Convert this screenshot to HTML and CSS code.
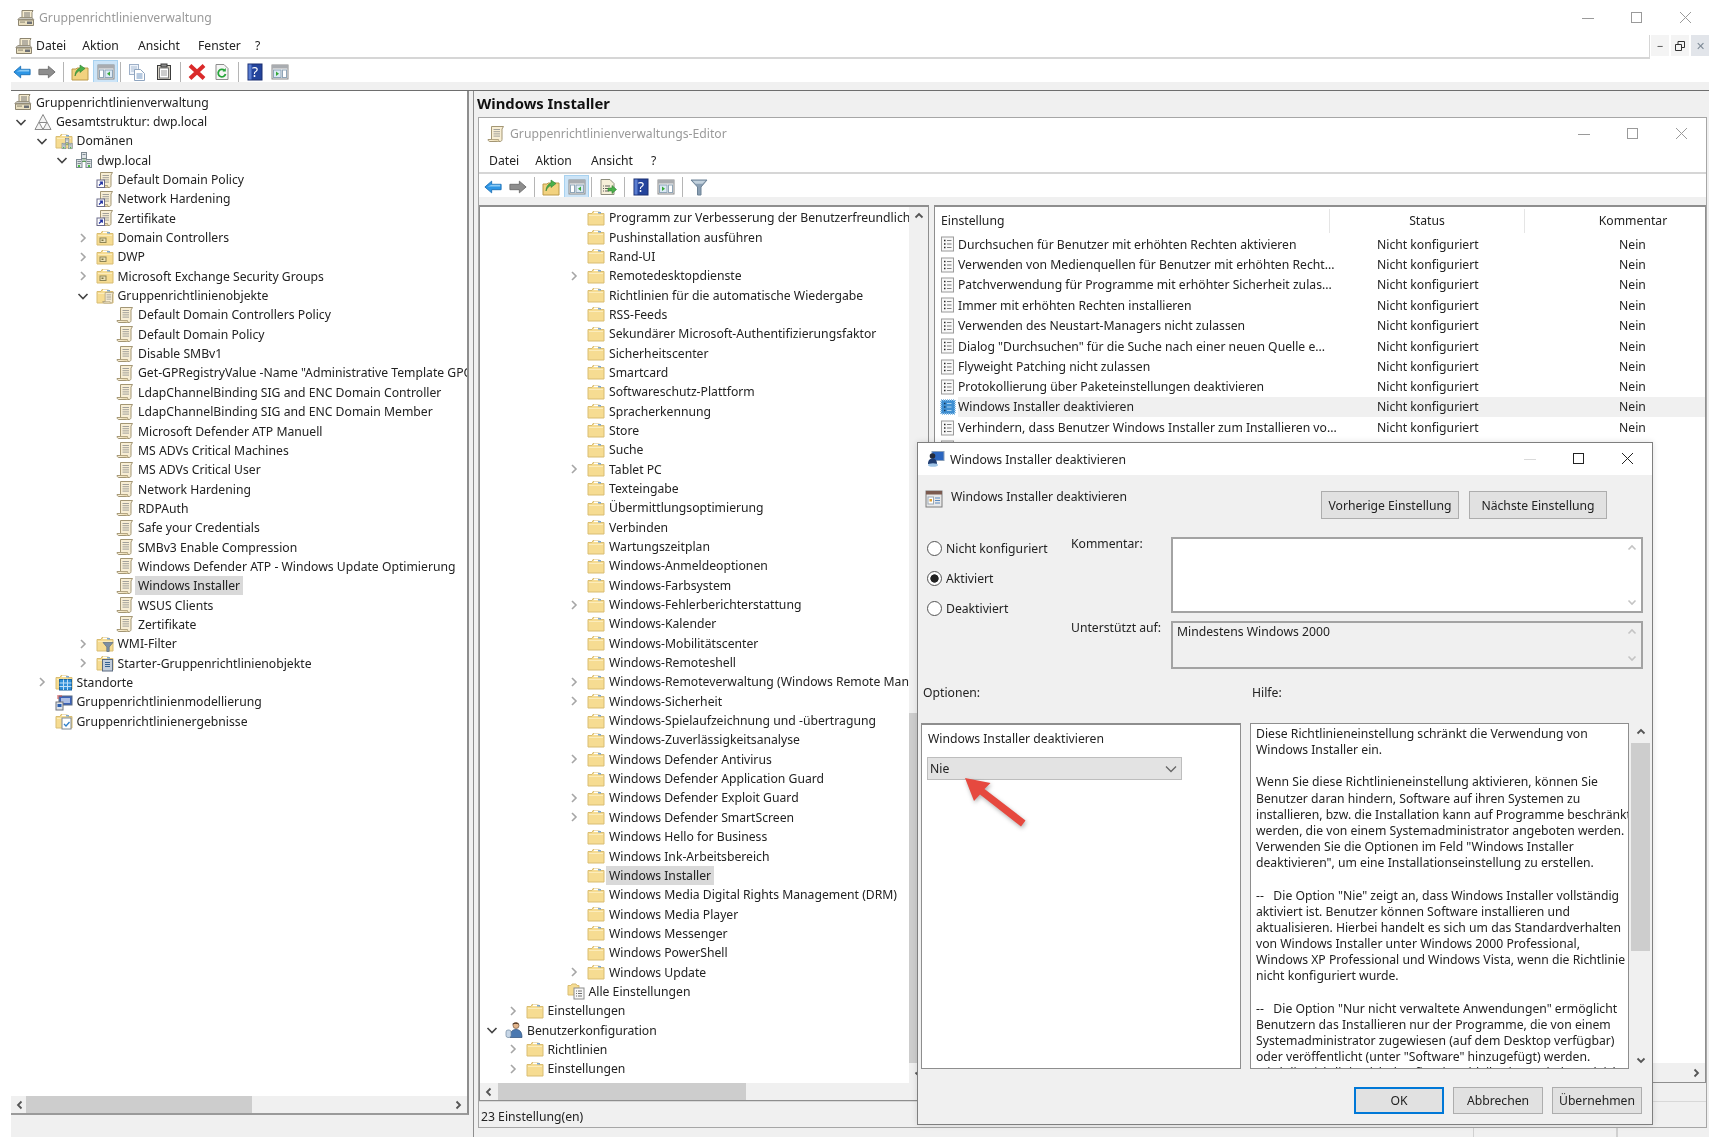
FILE: index.html
```html
<!DOCTYPE html>
<html lang="de">
<head>
    <meta charset="UTF-8">
    <title>Gruppenrichtlinienverwaltung</title>
    <link rel="stylesheet" href="styles.css">
</head>
<body>
<svg class="defs" width="0" height="0">
    <defs>
        <symbol id="chev-r" viewBox="0 0 14 14"><path d="M5 3l4 4-4 4" fill="none" stroke="#a6a6a6" stroke-width="1.6"/></symbol>
        <symbol id="chev-d" viewBox="0 0 14 14"><path d="M2.5 5l4.500 4.500L11.500 5" fill="none" stroke="#444" stroke-width="1.6"/></symbol>
        <symbol id="sb-l" viewBox="0 0 14 14"><path d="M8.500 3.500L5 7l3.500 3.500" fill="none" stroke="#555" stroke-width="1.800"/></symbol>
        <symbol id="sb-r" viewBox="0 0 14 14"><path d="M5.500 3.500L9 7l-3.500 3.500" fill="none" stroke="#555" stroke-width="1.800"/></symbol>
        <symbol id="sb-u" viewBox="0 0 14 14"><path d="M3.500 8.500L7 5l3.500 3.500" fill="none" stroke="#555" stroke-width="1.800"/></symbol>
        <symbol id="sb-d" viewBox="0 0 14 14"><path d="M3.500 5.500L7 9l3.500-3.500" fill="none" stroke="#555" stroke-width="1.800"/></symbol>
        <symbol id="sb-ug" viewBox="0 0 14 14"><path d="M3.500 8.500L7 5l3.500 3.500" fill="none" stroke="#c4c4c4" stroke-width="1.600"/></symbol>
        <symbol id="sb-dg" viewBox="0 0 14 14"><path d="M3.500 5.500L7 9l3.500-3.500" fill="none" stroke="#c4c4c4" stroke-width="1.600"/></symbol>

        <symbol id="folder" viewBox="0 0 18 18"><path d="M1 4.500h4l1-2h6l1 2h4v11.500H1z" fill="#f6dc92" stroke="#d9bd72"/><path d="M7 2.500h5l.6 1.500H7z" fill="#fff"/><rect x="2" y="6" width="14" height="1" fill="#fbecbc"/><rect x="11" y="3" width="3" height="1.500" fill="#7fa8d0"/></symbol>
        <symbol id="scroll" viewBox="0 0 18 18"><path d="M4.500 1.500h12l-1.500 2.500v10.500c0 1.200-.8 2-2 2H3c-1.200 0-2-1-2-2h3.500z" fill="#f8eed4" stroke="#a39674"/><path d="M6.500 4.500h6.500M6.500 6.700h6.500M6.500 8.900h6.500M6.500 11.100h6.500" stroke="#a2a09a"/><path d="M1 14.500h10.500l.5 2" fill="#ecdcb2" stroke="#a39674" stroke-width=".8"/></symbol>
        <symbol id="gpolink" viewBox="0 0 18 18"><use href="#scroll"/><rect x="1" y="9" width="7.500" height="7.500" fill="#fff" stroke="#6a6a8a"/><path d="M3 14.500l3-3M3.800 11.200H6.300V13.800" fill="none" stroke="#2030a0" stroke-width="1.200"/></symbol>
        <symbol id="console" viewBox="0 0 18 18"><path d="M5 1.500h11l-1 2v7H5z" fill="#f5ebcf" stroke="#8d8570"/><path d="M7 4h6M7 6h6M7 8h6" stroke="#777"/><path d="M1.500 11h15v5.500h-15z" fill="#e9dfc0" stroke="#8d8570"/><path d="M.8 10.500l2-2h12l2 2z" fill="#c7c5bd" stroke="#8d8570" stroke-width=".8"/><rect x="10" y="12.500" width="5" height="2.500" fill="#6d7075"/><rect x="3" y="12.500" width="5" height="1.200" fill="#9b9580"/></symbol>
        <symbol id="forest" viewBox="0 0 18 18"><path d="M9 1.500L17 16.500H1z" fill="#f4f4f4" stroke="#8a8a8a"/><path d="M5.200 9.500L9 16.500l3.800-7z" fill="#fff" stroke="#8a8a8a"/><path d="M5.200 9.500h7.600" stroke="#8a8a8a"/></symbol>
        <symbol id="servers" viewBox="0 0 18 18"><rect x="6.500" y="1.500" width="5" height="6" fill="#dfe3e6" stroke="#7e8a92"/><rect x="1.500" y="8.500" width="5.500" height="8" fill="#dfe3e6" stroke="#7e8a92"/><rect x="11" y="8.500" width="5.500" height="8" fill="#dfe3e6" stroke="#7e8a92"/><path d="M2.500 10.500h3.500M2.500 12.500h3.500M12 10.500h3.500M12 12.500h3.500M7.500 3.500h3" stroke="#7e8a92"/><rect x="3" y="14" width="2" height="2" fill="#4cb848"/><rect x="13" y="14" width="2" height="2" fill="#4cb848"/><path d="M9 7.500v3M7 10.500h4" stroke="#5b9a5b"/></symbol>
        <symbol id="domains" viewBox="0 0 18 18"><use href="#folder"/><g transform="translate(6 5.500) scale(.68)"><use href="#servers"/></g></symbol>
        <symbol id="ou" viewBox="0 0 18 18"><use href="#folder"/><rect x="4" y="9" width="6" height="4.500" fill="#ebe0b6" stroke="#8d8455"/><rect x="5.500" y="10.500" width="2" height="1.500" fill="#7c7440"/></symbol>
        <symbol id="gpos" viewBox="0 0 18 18"><use href="#folder"/><g transform="translate(6 4.500) scale(.7)"><use href="#scroll"/></g></symbol>
        <symbol id="wmi" viewBox="0 0 18 18"><use href="#folder"/><path d="M7 7.500h10l-3.800 4.500v4.500h-2.400V12z" fill="#7d8fa3" stroke="#5d6f83" stroke-width=".7"/></symbol>
        <symbol id="starter" viewBox="0 0 18 18"><use href="#folder"/><rect x="6.500" y="5.500" width="10" height="11.500" fill="#c3cedc" stroke="#5a6a80"/><path d="M9 8.500h5M9 10.500h5M9 12.500h5" stroke="#34608f"/></symbol>
        <symbol id="sites" viewBox="0 0 18 18"><use href="#folder"/><rect x="4.500" y="6.500" width="12" height="10.500" fill="#2f8fd8" stroke="#1d659f"/><path d="M8.500 6.500v10.500M12.500 6.500v10.500M4.500 10h12M4.500 13.500h12" stroke="#bfe0f7"/></symbol>
        <symbol id="model" viewBox="0 0 18 18"><rect x="4" y="3" width="13" height="9" fill="#3c63b8" stroke="#5a6a80"/><rect x="6" y="5" width="9" height="5" fill="#aebfe4"/><rect x="1" y="9" width="7" height="8" fill="#dfe3e8" stroke="#70757c"/><rect x="2.500" y="11" width="4" height="3" fill="#2b5fb0"/><path d="M2 3h5M2 5h2" stroke="#d04a4a"/></symbol>
        <symbol id="results" viewBox="0 0 18 18"><use href="#folder"/><rect x="7" y="6" width="9" height="11" fill="#fff" stroke="#7f8a93"/><path d="M9 12l2 2 3.500-4" fill="none" stroke="#2f7fc8" stroke-width="1.300"/></symbol>
        <symbol id="user" viewBox="0 0 18 18"><circle cx="11" cy="4.500" r="3" fill="#e2b48a" stroke="#75583f" stroke-width=".7"/><path d="M7 3.500c1-2.500 6-2.500 7 0-2-1-5-1-7 0z" fill="#4a3220"/><path d="M5 16.500c0-6 2.500-8 6-8s6 2 6 8z" fill="#4a78b0" stroke="#2d4d78" stroke-width=".7"/><rect x="1" y="9" width="5" height="7.500" rx="2" fill="#c7d6e6" stroke="#7088a0" stroke-width=".7"/></symbol>
        <symbol id="allset" viewBox="0 0 18 18"><path d="M1 3.500h3l1-1.500h4l1 1.500h2V13H1z" fill="#f6dc92" stroke="#d9bd72"/><rect x="7" y="6" width="10" height="11" fill="#f7f7f7" stroke="#8c8c8c"/><path d="M9 9h1M11 9h4M9 11.500h1M11 11.500h4M9 14h1M11 14h4" stroke="#6e6e6e"/></symbol>
        <symbol id="policy" viewBox="0 0 16 16"><rect x="1.500" y="1" width="12" height="14" fill="#f8f8f8" stroke="#9a9a9a"/><path d="M4 4.500h1.500M4 8h1.500M4 11.500h1.500" stroke="#222" stroke-width="1.400"/><path d="M7 4.500h4.500M7 8h4.500M7 11.500h4.500" stroke="#7b7b7b"/></symbol>
        <symbol id="policy-sel" viewBox="0 0 16 16"><rect x="1" y="1" width="14" height="14" fill="#3f8fd2"/><rect x="1" y="1" width="14" height="14" fill="none" stroke="#8fc0e6" stroke-dasharray="1 1" stroke-width="2"/><path d="M4 4.500h1.500M4 8h1.500M4 11.500h1.500" stroke="#14385c" stroke-width="1.400"/><path d="M7 4.500h4.500M7 8h4.500M7 11.500h4.500" stroke="#a9d2ef"/></symbol>
        <symbol id="dlgicon" viewBox="0 0 18 18"><rect x="5" y="1.500" width="12" height="9" fill="#2b66c0" stroke="#8aa0bb"/><circle cx="5.500" cy="6" r="2.800" fill="#22293a"/><path d="M1 14c0-4 2-5.500 4.500-5.500S10 10 10 14z" fill="#1f3c70"/><ellipse cx="6" cy="15" rx="5" ry="1.800" fill="#9fc4e6"/></symbol>
        <symbol id="seticon" viewBox="0 0 18 18"><rect x="1" y="1" width="16" height="16" fill="#e8e8e8" stroke="#7d7d7d"/><rect x="1" y="1" width="16" height="3.500" fill="#7b5a4f"/><rect x="3" y="7" width="5.500" height="7" fill="#fff" stroke="#9aa7b5"/><rect x="4.500" y="9" width="2.500" height="2.500" fill="#e0a030"/><path d="M10 8h5M10 10.500h5M10 13h5" stroke="#5a8ac0"/></symbol>

        <symbol id="t-back" viewBox="0 0 20 18"><path d="M1 9l7.500-6.500V6H19v6H8.500v3.500z" fill="#2d96e6" stroke="#1c6fb4" stroke-linejoin="round"/><path d="M8.500 6.500H18v2H4z" fill="#8ccbf5"/></symbol>
        <symbol id="t-fwd" viewBox="0 0 20 18"><path d="M19 9l-7.500-6.500V6H1v6h10.500v3.500z" fill="#8e8e8e" stroke="#6c6c6c" stroke-linejoin="round"/></symbol>
        <symbol id="t-up" viewBox="0 0 18 18"><path d="M1 6h4l1-1h11v12H1z" fill="#f2d27f" stroke="#bc9a4a"/><path d="M4 13c0-4 2-7 5-8V2l5 3.500-5 4V7.500c-2 .5-4 2.500-5 5.500z" fill="#49b04a" stroke="#2f7f30" stroke-width=".6"/></symbol>
        <symbol id="t-pane" viewBox="0 0 18 18"><rect x="1" y="2" width="16" height="14" fill="#f3f3f3" stroke="#8a8a8a"/><rect x="1" y="2" width="16" height="3.500" fill="#a9acb0"/><rect x="2.500" y="7" width="4" height="7.500" fill="#fff" stroke="#8fa5b8"/><rect x="8" y="7" width="7.500" height="7.500" fill="#dbe9f5" stroke="#8fa5b8"/><path d="M13 8.500v4.500l-3-2.250z" fill="#35a835"/></symbol>
        <symbol id="t-act" viewBox="0 0 18 18"><rect x="1" y="2" width="16" height="14" fill="#f3f3f3" stroke="#8a8a8a"/><rect x="1" y="2" width="16" height="3.500" fill="#a9acb0"/><rect x="2.500" y="7" width="7.500" height="7.500" fill="#dbe9f5" stroke="#8fa5b8"/><rect x="11.500" y="7" width="4" height="7.500" fill="#fff" stroke="#8fa5b8"/><path d="M5 8.500v4.500l3-2.250z" fill="#35a835"/></symbol>
        <symbol id="t-copy" viewBox="0 0 18 18"><rect x="1.500" y="1.500" width="9" height="10" fill="#eef3fa" stroke="#9eb0c8"/><path d="M3 4h6M3 6h6M3 8h4" stroke="#a9bcd4"/><path d="M6.500 6.500h6l4 4v7h-10z" fill="#fff" stroke="#8ea4bf"/><path d="M8.500 11h6M8.500 13h6M8.500 15h6" stroke="#6d93c0"/></symbol>
        <symbol id="t-paste" viewBox="0 0 18 18"><rect x="2.500" y="2.500" width="13" height="14" fill="#d6d2c6" stroke="#3c3c3c"/><rect x="4.500" y="5" width="9" height="10" fill="#fff" stroke="#777"/><rect x="6" y="1" width="6" height="3" fill="#8d8d8d" stroke="#3c3c3c"/><path d="M6 8h6M6 10h6M6 12h6" stroke="#999"/></symbol>
        <symbol id="t-del" viewBox="0 0 18 18"><path d="M2 2.500l14 13M16 2.500l-14 13" stroke="#da2a2a" stroke-width="4"/></symbol>
        <symbol id="t-ref" viewBox="0 0 18 18"><path d="M3 1.500h8l4 4v11H3z" fill="#f5f5f5" stroke="#8d8d8d"/><path d="M12.500 11a3.700 3.700 0 1 1-1-3.500" fill="none" stroke="#26a53a" stroke-width="1.800"/><path d="M12.800 5v3.500H9.500z" fill="#26a53a"/></symbol>
        <symbol id="t-help" viewBox="0 0 18 18"><rect x="2" y="1" width="14" height="16" fill="#24449c" stroke="#1a2f70"/><rect x="2.500" y="1.500" width="3" height="15" fill="#5a7dd0"/></symbol>
        <symbol id="t-exp" viewBox="0 0 18 18"><path d="M2 1.500h9l4 4v11H2z" fill="#f6efd8" stroke="#8e8e7e"/><path d="M4 8h1M6 8h5M4 10.500h1M6 10.500h4M4 13h1M6 13h4" stroke="#5f5f5f"/><path d="M9 10h4V7.500l4.500 4-4.500 4V13H9z" fill="#49b04a" stroke="#2f7f30" stroke-width=".6"/></symbol>
        <symbol id="t-filter" viewBox="0 0 18 18"><path d="M1 2h16l-6 7v8H7.500V9z" fill="#8a9fb3" stroke="#6c8296"/><path d="M2.500 2.800h13l-3 3h-7z" fill="#c3d2de"/></symbol>
        <symbol id="w-min" viewBox="0 0 14 14"><path d="M1 7.500h12" stroke="#9a9a9a"/></symbol>
        <symbol id="w-max" viewBox="0 0 14 14"><rect x="1.500" y="1.500" width="10" height="10" fill="none" stroke="#9a9a9a"/></symbol>
        <symbol id="w-close" viewBox="0 0 14 14"><path d="M1 1l11 11M12 1L1 12" stroke="#9a9a9a"/></symbol>
        <symbol id="w-maxk" viewBox="0 0 14 14"><rect x="1.500" y="1.500" width="10" height="10" fill="none" stroke="#222"/></symbol>
        <symbol id="w-closek" viewBox="0 0 14 14"><path d="M1 1l11 11M12 1L1 12" stroke="#222"/></symbol>
        <symbol id="w-minf" viewBox="0 0 14 14"><path d="M1 7.500h12" stroke="#dadada"/></symbol>
    </defs>
</svg>

<div class="app">
    <div class="title-bar">
        <svg class="ic title-icon"><use href="#console"/></svg>
        <span class="title-text">Gruppenrichtlinienverwaltung</span>
        <div class="win-controls">
            <svg class="wc"><use href="#w-min"/></svg>
            <svg class="wc"><use href="#w-max"/></svg>
            <svg class="wc"><use href="#w-close"/></svg>
        </div>
    </div>

    <div class="menu-bar">
        <svg class="ic menu-icon"><use href="#console"/></svg>
        <span class="menu-item m-datei">Datei</span>
        <span class="menu-item m-aktion">Aktion</span>
        <span class="menu-item m-ansicht">Ansicht</span>
        <span class="menu-item m-fenster">Fenster</span>
        <span class="menu-item">?</span>
        <div class="mdi-controls">
            <span class="mdi-btn">&#8722;</span>
            <span class="mdi-btn"><svg width="12" height="12" viewBox="0 0 12 12"><path d="M1.500 4.500h6v6h-6zM4 4.500V1.500h6.500v6h-3" fill="none" stroke="#333"/></svg></span>
            <span class="mdi-btn mdi-close">&#10005;</span>
        </div>
    </div>

    <div class="tool-bar">
        <svg class="tb"><use href="#t-back"/></svg>
        <svg class="tb"><use href="#t-fwd"/></svg>
        <span class="tb-sep"></span>
        <svg class="tb"><use href="#t-up"/></svg>
        <span class="tb-on"><svg class="tb"><use href="#t-pane"/></svg></span>
        <span class="tb-sep"></span>
        <svg class="tb"><use href="#t-copy"/></svg>
        <svg class="tb tb-paste"><use href="#t-paste"/></svg>
        <span class="tb-sep"></span>
        <svg class="tb"><use href="#t-del"/></svg>
        <svg class="tb"><use href="#t-ref"/></svg>
        <span class="tb-sep"></span>
        <span class="help-btn"><svg class="tb"><use href="#t-help"/></svg><span class="help-q">?</span></span>
        <svg class="tb"><use href="#t-act"/></svg>
    </div>
    <div class="band"></div>

    <div class="content">
        <div class="left-col">
            <div class="left-pane">
                <div class="tree left-tree">
                    <div class="row l0"><svg class="ic"><use href="#console"/></svg><span class="lbl">Gruppenrichtlinienverwaltung</span></div>
                    <div class="row l1"><svg class="tw"><use href="#chev-d"/></svg><svg class="ic"><use href="#forest"/></svg><span class="lbl">Gesamtstruktur: dwp.local</span></div>
                    <div class="row l2"><svg class="tw"><use href="#chev-d"/></svg><svg class="ic"><use href="#domains"/></svg><span class="lbl">Domänen</span></div>
                    <div class="row l3"><svg class="tw"><use href="#chev-d"/></svg><svg class="ic"><use href="#servers"/></svg><span class="lbl">dwp.local</span></div>
                    <div class="row l4"><span class="tw"></span><svg class="ic"><use href="#gpolink"/></svg><span class="lbl">Default Domain Policy</span></div>
                    <div class="row l4"><span class="tw"></span><svg class="ic"><use href="#gpolink"/></svg><span class="lbl">Network Hardening</span></div>
                    <div class="row l4"><span class="tw"></span><svg class="ic"><use href="#gpolink"/></svg><span class="lbl">Zertifikate</span></div>
                    <div class="row l4"><svg class="tw"><use href="#chev-r"/></svg><svg class="ic"><use href="#ou"/></svg><span class="lbl">Domain Controllers</span></div>
                    <div class="row l4"><svg class="tw"><use href="#chev-r"/></svg><svg class="ic"><use href="#ou"/></svg><span class="lbl">DWP</span></div>
                    <div class="row l4"><svg class="tw"><use href="#chev-r"/></svg><svg class="ic"><use href="#ou"/></svg><span class="lbl">Microsoft Exchange Security Groups</span></div>
                    <div class="row l4"><svg class="tw"><use href="#chev-d"/></svg><svg class="ic"><use href="#gpos"/></svg><span class="lbl">Gruppenrichtlinienobjekte</span></div>
                    <div class="row l5"><span class="tw"></span><svg class="ic"><use href="#scroll"/></svg><span class="lbl">Default Domain Controllers Policy</span></div>
                    <div class="row l5"><span class="tw"></span><svg class="ic"><use href="#scroll"/></svg><span class="lbl">Default Domain Policy</span></div>
                    <div class="row l5"><span class="tw"></span><svg class="ic"><use href="#scroll"/></svg><span class="lbl">Disable SMBv1</span></div>
                    <div class="row l5"><span class="tw"></span><svg class="ic"><use href="#scroll"/></svg><span class="lbl">Get-GPRegistryValue -Name "Administrative Template GPO"</span></div>
                    <div class="row l5"><span class="tw"></span><svg class="ic"><use href="#scroll"/></svg><span class="lbl">LdapChannelBinding SIG and ENC Domain Controller</span></div>
                    <div class="row l5"><span class="tw"></span><svg class="ic"><use href="#scroll"/></svg><span class="lbl">LdapChannelBinding SIG and ENC Domain Member</span></div>
                    <div class="row l5"><span class="tw"></span><svg class="ic"><use href="#scroll"/></svg><span class="lbl">Microsoft Defender ATP Manuell</span></div>
                    <div class="row l5"><span class="tw"></span><svg class="ic"><use href="#scroll"/></svg><span class="lbl">MS ADVs Critical Machines</span></div>
                    <div class="row l5"><span class="tw"></span><svg class="ic"><use href="#scroll"/></svg><span class="lbl">MS ADVs Critical User</span></div>
                    <div class="row l5"><span class="tw"></span><svg class="ic"><use href="#scroll"/></svg><span class="lbl">Network Hardening</span></div>
                    <div class="row l5"><span class="tw"></span><svg class="ic"><use href="#scroll"/></svg><span class="lbl">RDPAuth</span></div>
                    <div class="row l5"><span class="tw"></span><svg class="ic"><use href="#scroll"/></svg><span class="lbl">Safe your Credentials</span></div>
                    <div class="row l5"><span class="tw"></span><svg class="ic"><use href="#scroll"/></svg><span class="lbl">SMBv3 Enable Compression</span></div>
                    <div class="row l5"><span class="tw"></span><svg class="ic"><use href="#scroll"/></svg><span class="lbl">Windows Defender ATP - Windows Update Optimierung</span></div>
                    <div class="row l5"><span class="tw"></span><svg class="ic"><use href="#scroll"/></svg><span class="lbl sel">Windows Installer</span></div>
                    <div class="row l5"><span class="tw"></span><svg class="ic"><use href="#scroll"/></svg><span class="lbl">WSUS Clients</span></div>
                    <div class="row l5"><span class="tw"></span><svg class="ic"><use href="#scroll"/></svg><span class="lbl">Zertifikate</span></div>
                    <div class="row l4"><svg class="tw"><use href="#chev-r"/></svg><svg class="ic"><use href="#wmi"/></svg><span class="lbl">WMI-Filter</span></div>
                    <div class="row l4"><svg class="tw"><use href="#chev-r"/></svg><svg class="ic"><use href="#starter"/></svg><span class="lbl">Starter-Gruppenrichtlinienobjekte</span></div>
                    <div class="row l2"><svg class="tw"><use href="#chev-r"/></svg><svg class="ic"><use href="#sites"/></svg><span class="lbl">Standorte</span></div>
                    <div class="row l2"><span class="tw"></span><svg class="ic"><use href="#model"/></svg><span class="lbl">Gruppenrichtlinienmodellierung</span></div>
                    <div class="row l2"><span class="tw"></span><svg class="ic"><use href="#results"/></svg><span class="lbl">Gruppenrichtlinienergebnisse</span></div>
                </div>
                <div class="hscroll">
                    <svg class="sb-arrow"><use href="#sb-l"/></svg>
                    <div class="hs-track left-track"><span class="hs-thumb left-thumb"></span></div>
                    <svg class="sb-arrow"><use href="#sb-r"/></svg>
                </div>
            </div>
        </div>

        <div class="right-col">
            <div class="pane-head">Windows Installer</div>
            <div class="editor">
                <div class="title-bar ed-title">
                    <svg class="ic ed-icon"><use href="#scroll"/></svg>
                    <span class="title-text">Gruppenrichtlinienverwaltungs-Editor</span>
                    <div class="win-controls">
                        <svg class="wc"><use href="#w-min"/></svg>
                        <svg class="wc"><use href="#w-max"/></svg>
                        <svg class="wc"><use href="#w-close"/></svg>
                    </div>
                </div>
                <div class="menu-bar ed-menu">
                    <span class="menu-item m-datei">Datei</span>
                    <span class="menu-item m-aktion">Aktion</span>
                    <span class="menu-item m-ansicht">Ansicht</span>
                    <span class="menu-item">?</span>
                </div>
                <div class="tool-bar ed-tools">
                    <svg class="tb"><use href="#t-back"/></svg>
                    <svg class="tb"><use href="#t-fwd"/></svg>
                    <span class="tb-sep"></span>
                    <svg class="tb"><use href="#t-up"/></svg>
                    <span class="tb-on"><svg class="tb"><use href="#t-pane"/></svg></span>
                    <span class="tb-sep"></span>
                    <svg class="tb"><use href="#t-exp"/></svg>
                    <span class="tb-sep"></span>
                    <span class="help-btn"><svg class="tb"><use href="#t-help"/></svg><span class="help-q">?</span></span>
                    <svg class="tb"><use href="#t-act"/></svg>
                    <span class="tb-sep"></span>
                    <svg class="tb"><use href="#t-filter"/></svg>
                </div>
                <div class="band"></div>

                <div class="ed-panes">
                    <div class="ed-tree-pane">
                        <div class="ed-tree-main">
                            <div class="tree ed-tree">
                                <div class="row d5"><span class="tw"></span><svg class="ic"><use href="#folder"/></svg><span class="lbl">Programm zur Verbesserung der Benutzerfreundlichkeit</span></div>
                                <div class="row d5"><span class="tw"></span><svg class="ic"><use href="#folder"/></svg><span class="lbl">Pushinstallation ausführen</span></div>
                                <div class="row d5"><span class="tw"></span><svg class="ic"><use href="#folder"/></svg><span class="lbl">Rand-UI</span></div>
                                <div class="row d5"><svg class="tw"><use href="#chev-r"/></svg><svg class="ic"><use href="#folder"/></svg><span class="lbl">Remotedesktopdienste</span></div>
                                <div class="row d5"><span class="tw"></span><svg class="ic"><use href="#folder"/></svg><span class="lbl">Richtlinien für die automatische Wiedergabe</span></div>
                                <div class="row d5"><span class="tw"></span><svg class="ic"><use href="#folder"/></svg><span class="lbl">RSS-Feeds</span></div>
                                <div class="row d5"><span class="tw"></span><svg class="ic"><use href="#folder"/></svg><span class="lbl">Sekundärer Microsoft-Authentifizierungsfaktor</span></div>
                                <div class="row d5"><span class="tw"></span><svg class="ic"><use href="#folder"/></svg><span class="lbl">Sicherheitscenter</span></div>
                                <div class="row d5"><span class="tw"></span><svg class="ic"><use href="#folder"/></svg><span class="lbl">Smartcard</span></div>
                                <div class="row d5"><span class="tw"></span><svg class="ic"><use href="#folder"/></svg><span class="lbl">Softwareschutz-Plattform</span></div>
                                <div class="row d5"><span class="tw"></span><svg class="ic"><use href="#folder"/></svg><span class="lbl">Spracherkennung</span></div>
                                <div class="row d5"><span class="tw"></span><svg class="ic"><use href="#folder"/></svg><span class="lbl">Store</span></div>
                                <div class="row d5"><span class="tw"></span><svg class="ic"><use href="#folder"/></svg><span class="lbl">Suche</span></div>
                                <div class="row d5"><svg class="tw"><use href="#chev-r"/></svg><svg class="ic"><use href="#folder"/></svg><span class="lbl">Tablet PC</span></div>
                                <div class="row d5"><span class="tw"></span><svg class="ic"><use href="#folder"/></svg><span class="lbl">Texteingabe</span></div>
                                <div class="row d5"><span class="tw"></span><svg class="ic"><use href="#folder"/></svg><span class="lbl">Übermittlungsoptimierung</span></div>
                                <div class="row d5"><span class="tw"></span><svg class="ic"><use href="#folder"/></svg><span class="lbl">Verbinden</span></div>
                                <div class="row d5"><span class="tw"></span><svg class="ic"><use href="#folder"/></svg><span class="lbl">Wartungszeitplan</span></div>
                                <div class="row d5"><span class="tw"></span><svg class="ic"><use href="#folder"/></svg><span class="lbl">Windows-Anmeldeoptionen</span></div>
                                <div class="row d5"><span class="tw"></span><svg class="ic"><use href="#folder"/></svg><span class="lbl">Windows-Farbsystem</span></div>
                                <div class="row d5"><svg class="tw"><use href="#chev-r"/></svg><svg class="ic"><use href="#folder"/></svg><span class="lbl">Windows-Fehlerberichterstattung</span></div>
                                <div class="row d5"><span class="tw"></span><svg class="ic"><use href="#folder"/></svg><span class="lbl">Windows-Kalender</span></div>
                                <div class="row d5"><span class="tw"></span><svg class="ic"><use href="#folder"/></svg><span class="lbl">Windows-Mobilitätscenter</span></div>
                                <div class="row d5"><span class="tw"></span><svg class="ic"><use href="#folder"/></svg><span class="lbl">Windows-Remoteshell</span></div>
                                <div class="row d5"><svg class="tw"><use href="#chev-r"/></svg><svg class="ic"><use href="#folder"/></svg><span class="lbl">Windows-Remoteverwaltung (Windows Remote Management)</span></div>
                                <div class="row d5"><svg class="tw"><use href="#chev-r"/></svg><svg class="ic"><use href="#folder"/></svg><span class="lbl">Windows-Sicherheit</span></div>
                                <div class="row d5"><span class="tw"></span><svg class="ic"><use href="#folder"/></svg><span class="lbl">Windows-Spielaufzeichnung und -übertragung</span></div>
                                <div class="row d5"><span class="tw"></span><svg class="ic"><use href="#folder"/></svg><span class="lbl">Windows-Zuverlässigkeitsanalyse</span></div>
                                <div class="row d5"><svg class="tw"><use href="#chev-r"/></svg><svg class="ic"><use href="#folder"/></svg><span class="lbl">Windows Defender Antivirus</span></div>
                                <div class="row d5"><span class="tw"></span><svg class="ic"><use href="#folder"/></svg><span class="lbl">Windows Defender Application Guard</span></div>
                                <div class="row d5"><svg class="tw"><use href="#chev-r"/></svg><svg class="ic"><use href="#folder"/></svg><span class="lbl">Windows Defender Exploit Guard</span></div>
                                <div class="row d5"><svg class="tw"><use href="#chev-r"/></svg><svg class="ic"><use href="#folder"/></svg><span class="lbl">Windows Defender SmartScreen</span></div>
                                <div class="row d5"><span class="tw"></span><svg class="ic"><use href="#folder"/></svg><span class="lbl">Windows Hello for Business</span></div>
                                <div class="row d5"><span class="tw"></span><svg class="ic"><use href="#folder"/></svg><span class="lbl">Windows Ink-Arbeitsbereich</span></div>
                                <div class="row d5"><span class="tw"></span><svg class="ic"><use href="#folder"/></svg><span class="lbl sel">Windows Installer</span></div>
                                <div class="row d5"><span class="tw"></span><svg class="ic"><use href="#folder"/></svg><span class="lbl">Windows Media Digital Rights Management (DRM)</span></div>
                                <div class="row d5"><span class="tw"></span><svg class="ic"><use href="#folder"/></svg><span class="lbl">Windows Media Player</span></div>
                                <div class="row d5"><span class="tw"></span><svg class="ic"><use href="#folder"/></svg><span class="lbl">Windows Messenger</span></div>
                                <div class="row d5"><span class="tw"></span><svg class="ic"><use href="#folder"/></svg><span class="lbl">Windows PowerShell</span></div>
                                <div class="row d5"><svg class="tw"><use href="#chev-r"/></svg><svg class="ic"><use href="#folder"/></svg><span class="lbl">Windows Update</span></div>
                                <div class="row d4"><span class="tw"></span><svg class="ic"><use href="#allset"/></svg><span class="lbl">Alle Einstellungen</span></div>
                                <div class="row d2"><svg class="tw"><use href="#chev-r"/></svg><svg class="ic"><use href="#folder"/></svg><span class="lbl">Einstellungen</span></div>
                                <div class="row d1"><svg class="tw"><use href="#chev-d"/></svg><svg class="ic"><use href="#user"/></svg><span class="lbl">Benutzerkonfiguration</span></div>
                                <div class="row d2"><svg class="tw"><use href="#chev-r"/></svg><svg class="ic"><use href="#folder"/></svg><span class="lbl">Richtlinien</span></div>
                                <div class="row d2"><svg class="tw"><use href="#chev-r"/></svg><svg class="ic"><use href="#folder"/></svg><span class="lbl">Einstellungen</span></div>
                            </div>
                            <div class="vscroll">
                                <svg class="sb-arrow"><use href="#sb-u"/></svg>
                                <div class="vs-track ed-vtrack"><span class="vs-thumb ed-vthumb"></span></div>
                                <svg class="sb-arrow"><use href="#sb-d"/></svg>
                            </div>
                        </div>
                        <div class="hscroll">
                            <svg class="sb-arrow"><use href="#sb-l"/></svg>
                            <div class="hs-track ed-track"><span class="hs-thumb ed-thumb"></span></div>
                            <svg class="sb-arrow"><use href="#sb-r"/></svg>
                        </div>
                    </div>

                    <div class="list-pane">
                        <div class="list-main">
                            <div class="list-head">
                                <span class="lh-name">Einstellung</span>
                                <span class="lh-status">Status</span>
                                <span class="lh-comment">Kommentar</span>
                            </div>
                            <div class="list-row"><svg class="pi"><use href="#policy"/></svg><span class="c-name">Durchsuchen für Benutzer mit erhöhten Rechten aktivieren</span><span class="c-status">Nicht konfiguriert</span><span>Nein</span></div>
                            <div class="list-row"><svg class="pi"><use href="#policy"/></svg><span class="c-name">Verwenden von Medienquellen für Benutzer mit erhöhten Recht...</span><span class="c-status">Nicht konfiguriert</span><span>Nein</span></div>
                            <div class="list-row"><svg class="pi"><use href="#policy"/></svg><span class="c-name">Patchverwendung für Programme mit erhöhter Sicherheit zulas...</span><span class="c-status">Nicht konfiguriert</span><span>Nein</span></div>
                            <div class="list-row"><svg class="pi"><use href="#policy"/></svg><span class="c-name">Immer mit erhöhten Rechten installieren</span><span class="c-status">Nicht konfiguriert</span><span>Nein</span></div>
                            <div class="list-row"><svg class="pi"><use href="#policy"/></svg><span class="c-name">Verwenden des Neustart-Managers nicht zulassen</span><span class="c-status">Nicht konfiguriert</span><span>Nein</span></div>
                            <div class="list-row"><svg class="pi"><use href="#policy"/></svg><span class="c-name">Dialog "Durchsuchen" für die Suche nach einer neuen Quelle e...</span><span class="c-status">Nicht konfiguriert</span><span>Nein</span></div>
                            <div class="list-row"><svg class="pi"><use href="#policy"/></svg><span class="c-name">Flyweight Patching nicht zulassen</span><span class="c-status">Nicht konfiguriert</span><span>Nein</span></div>
                            <div class="list-row"><svg class="pi"><use href="#policy"/></svg><span class="c-name">Protokollierung über Paketeinstellungen deaktivieren</span><span class="c-status">Nicht konfiguriert</span><span>Nein</span></div>
                            <div class="list-row list-sel"><svg class="pi"><use href="#policy-sel"/></svg><span class="c-name">Windows Installer deaktivieren</span><span class="c-status">Nicht konfiguriert</span><span>Nein</span></div>
                            <div class="list-row"><svg class="pi"><use href="#policy"/></svg><span class="c-name">Verhindern, dass Benutzer Windows Installer zum Installieren vo...</span><span class="c-status">Nicht konfiguriert</span><span>Nein</span></div>
                            <div class="list-row"><svg class="pi"><use href="#policy"/></svg></div>
                        </div>
                        <div class="hscroll list-scroll"><svg class="sb-arrow"><use href="#sb-r"/></svg></div>
                    </div>
                </div>
                <div class="ed-status">23 Einstellung(en)</div>
            </div>
            <div class="outer-status"><span class="os-cell os-a"></span><span class="os-cell os-b"></span><span class="os-cell"></span></div>
        </div>
    </div>

    <div class="dialog">
        <div class="title-bar dlg-title">
            <svg class="ic dlg-icon"><use href="#dlgicon"/></svg>
            <span class="dlg-title-text">Windows Installer deaktivieren</span>
            <div class="win-controls dlg-controls">
                <svg class="wc"><use href="#w-minf"/></svg>
                <svg class="wc"><use href="#w-maxk"/></svg>
                <svg class="wc"><use href="#w-closek"/></svg>
            </div>
        </div>
        <div class="dlg-body">
            <div class="dlg-head">
                <svg class="ic dlg-set-icon"><use href="#seticon"/></svg>
                <span class="dlg-head-text">Windows Installer deaktivieren</span>
                <span class="btn btn-prev">Vorherige Einstellung</span>
                <span class="btn btn-next">Nächste Einstellung</span>
            </div>
            <div class="dlg-form">
                <div class="radios">
                    <div class="radio-row"><span class="radio"></span>Nicht konfiguriert</div>
                    <div class="radio-row"><span class="radio radio-on"></span>Aktiviert</div>
                    <div class="radio-row"><span class="radio"></span>Deaktiviert</div>
                </div>
                <div class="fields">
                    <span class="f-label">Kommentar:</span>
                    <div class="f-box f-white">
                        <div class="f-scroll"><svg class="sb-arrow"><use href="#sb-ug"/></svg><svg class="sb-arrow"><use href="#sb-dg"/></svg></div>
                    </div>
                    <span class="f-label">Unterstützt auf:</span>
                    <div class="f-box f-grey">
                        <span class="f-text">Mindestens Windows 2000</span>
                        <div class="f-scroll"><svg class="sb-arrow"><use href="#sb-ug"/></svg><svg class="sb-arrow"><use href="#sb-dg"/></svg></div>
                    </div>
                </div>
            </div>
            <div class="dlg-labels">
                <span class="lbl-opt">Optionen:</span>
                <span>Hilfe:</span>
            </div>
            <div class="dlg-panels">
                <div class="opt-box">
                    <div class="opt-title">Windows Installer deaktivieren</div>
                    <div class="combo">Nie<svg class="combo-chev" viewBox="0 0 14 14"><path d="M2 4.500l5 5 5-5" fill="none" stroke="#666" stroke-width="1.300"/></svg></div>
                    <svg class="red-arrow" viewBox="0 0 70 60"><path d="M6 4l9 23 6-6.500 41 32 4.500-6-41-31.500 6-6z" fill="#e6493f"/></svg>
                </div>
                <div class="help-box">
                    <p>Diese Richtlinieneinstellung schränkt die Verwendung von<br>Windows Installer ein.</p>
                    <p>Wenn Sie diese Richtlinieneinstellung aktivieren, können Sie<br>Benutzer daran hindern, Software auf ihren Systemen zu<br>installieren, bzw. die Installation kann auf Programme beschränkt<br>werden, die von einem Systemadministrator angeboten werden.<br>Verwenden Sie die Optionen im Feld "Windows Installer<br>deaktivieren", um eine Installationseinstellung zu erstellen.</p>
                    <p>--&nbsp;&nbsp; Die Option "Nie" zeigt an, dass Windows Installer vollständig<br>aktiviert ist. Benutzer können Software installieren und<br>aktualisieren. Hierbei handelt es sich um das Standardverhalten<br>von Windows Installer unter Windows 2000 Professional,<br>Windows XP Professional und Windows Vista, wenn die Richtlinie<br>nicht konfiguriert wurde.</p>
                    <p>--&nbsp;&nbsp; Die Option "Nur nicht verwaltete Anwendungen" ermöglicht<br>Benutzern das Installieren nur der Programme, die von einem<br>Systemadministrator zugewiesen (auf dem Desktop verfügbar)<br>oder veröffentlicht (unter "Software" hinzugefügt) werden.<br>Wird die Richtlinie nicht konfiguriert, bleibt das Verhalten gleich</p>
                </div>
                <div class="vscroll help-scroll">
                    <svg class="sb-arrow"><use href="#sb-u"/></svg>
                    <div class="vs-track help-track"><span class="vs-thumb help-thumb"></span></div>
                    <svg class="sb-arrow"><use href="#sb-d"/></svg>
                </div>
            </div>
            <div class="dlg-buttons">
                <span class="btn btn-ok">OK</span>
                <span class="btn btn-act">Abbrechen</span>
                <span class="btn btn-act">Übernehmen</span>
            </div>
        </div>
    </div>
</div>
</body>
</html>
```

FILE: styles.css
```css
* {
    box-sizing: border-box;
}

html, body {
    margin: 0;
    background-color: #fff;
}

body {
    width: 1715px;
    height: 1143px;
    overflow: hidden;
    font-family: 'Noto Sans', 'Open Sans', sans-serif;
    font-size: 12.2px;
    color: #222;
}

.defs {
    position: absolute;
}

.app {
    position: relative;
    width: 1698px;
    height: 1137px;
    margin-left: 11px;
    display: flex;
    flex-direction: column;
    filter: blur(0.3px);
}

/* title bars */
.title-bar {
    display: flex;
    align-items: center;
    height: 35px;
    flex: none;
    background-color: #fff;
}

.title-text {
    color: #9a9a9a;
}

.title-icon {
    margin: 0 4px 0 6px;
}

.win-controls {
    margin-left: auto;
    display: flex;
    gap: 35px;
    padding-right: 16px;
}

.wc {
    width: 14px;
    height: 14px;
}

.ic {
    width: 18px;
    height: 18px;
    flex: none;
}

/* menus */
.menu-bar {
    display: flex;
    align-items: center;
    height: 24px;
    flex: none;
    padding-bottom: 1px;
    border-bottom: 2px solid #d6d6d6;
    background-color: #fff;
}

.menu-icon {
    margin: 0 3px 0 4px;
}

.menu-item {
    margin-right: 22px;
}

.m-datei {
    margin-right: 16px;
}

.m-aktion {
    margin-right: 19px;
}

.m-ansicht {
    margin-right: 18px;
}

.m-fenster {
    margin-right: 14px;
}

.mdi-controls {
    margin-left: auto;
    display: flex;
    height: 24px;
    padding-left: 1px;
    border-left: 1px solid #d6d6d6;
    gap: 2px;
    margin-bottom: -3px;
    background-color: #fff;
    align-self: flex-start;
}

.mdi-btn {
    width: 18px;
    height: 21px;
    display: flex;
    align-items: center;
    justify-content: center;
    font-size: 11px;
    color: #333;
    background-color: #f4f4f4;
}

.mdi-close {
    color: #7e8a96;
    background-color: #e2e5ea;
}

/* toolbars */
.tool-bar {
    display: flex;
    align-items: center;
    height: 23px;
    flex: none;
    padding: 2px 0 0 2px;
    gap: 7px;
    background-color: #fff;
}

.tb {
    width: 18px;
    height: 18px;
    flex: none;
}

.tb-paste {
    margin-left: 2px;
}

.tb-sep {
    width: 1px;
    height: 20px;
    background-color: #b5b5b5;
}

.tb-on {
    display: flex;
    align-items: center;
    justify-content: center;
    width: 25px;
    height: 23px;
    margin: 0 -5px 0 -3px;
    background-color: #cce4f7;
    border: 1px solid #a8d2f0;
}

.help-btn {
    position: relative;
    width: 18px;
    height: 18px;
}

.help-q {
    position: absolute;
    left: 0;
    right: 0;
    top: -1px;
    text-align: center;
    color: #fff;
    font-size: 14px;
    line-height: 20px;
}

.band {
    height: 8px;
    flex: none;
    background-color: #f0f0f0;
}

/* main panes */
.content {
    flex: 1;
    display: flex;
    min-height: 0;
    background-color: #f0f0f0;
    border-top: 1px solid #6e6e6e;
}

.left-col {
    width: 458px;
    flex: none;
    height: 1024px;
}

.left-pane {
    height: 100%;
    display: flex;
    flex-direction: column;
    background-color: #fff;
    border-right: 2px solid #8e8e8e;
    border-bottom: 2px solid #9a9a9a;
}

.tree {
    overflow: hidden;
    white-space: nowrap;
}

.left-tree {
    flex: 1;
    padding-top: 1.500px;
}

.row {
    display: flex;
    align-items: center;
    height: 19.35px;
}

.tw {
    width: 14px;
    height: 14px;
    margin-right: 6px;
    flex: none;
}

.row .ic {
    margin-right: 4px;
}

.l0 { padding-left: 3px; }
.l1 { padding-left: 3px; }
.l2 { padding-left: 23.500px; }
.l3 { padding-left: 44px; }
.l4 { padding-left: 64.500px; }
.l5 { padding-left: 85px; }

.d1 { padding-left: 5px; }
.d2 { padding-left: 25.500px; }
.d4 { padding-left: 66.500px; }
.d5 { padding-left: 87px; }

.sel {
    background-color: #d9d9d9;
    padding: 0 3px;
    margin-left: -3px;
    line-height: 19px;
}

.hscroll {
    display: flex;
    align-items: center;
    height: 17px;
    flex: none;
    background-color: #f0f0f0;
}

.sb-arrow {
    width: 14px;
    height: 14px;
    flex: none;
    margin: 2px;
}

.hs-track {
    flex: 1;
    height: 100%;
}

.hs-thumb {
    display: block;
    height: 100%;
    background-color: #cdcdcd;
}

.left-thumb {
    width: 226px;
    margin-left: -3px;
}

.vscroll {
    display: flex;
    flex-direction: column;
    align-items: center;
    width: 19px;
    flex: none;
    background-color: #f0f0f0;
}

.vs-track {
    flex: 1;
    width: 100%;
}

.vs-thumb {
    display: block;
    width: 100%;
    background-color: #cdcdcd;
}

/* right side with the editor window */
.right-col {
    flex: 1;
    margin-left: 4px;
    display: flex;
    flex-direction: column;
    border-left: 1px solid #8e8e8e;
    min-width: 0;
}

.pane-head {
    height: 26px;
    flex: none;
    padding-left: 3px;
    line-height: 25px;
    font-size: 14.800px;
    font-weight: bold;
    color: #111;
}

.editor {
    height: 1011px;
    flex: none;
    margin: 0 2px 0 4px;
    display: flex;
    flex-direction: column;
    border: 1px solid #a6a6a6;
    background-color: #f0f0f0;
}

.ed-title {
    height: 31px;
}

.ed-icon {
    margin: 0 5px 0 8px;
}

.ed-title .win-controls {
    padding-right: 17px;
}

.ed-menu {
    height: 25px;
    padding-left: 10px;
}

.ed-tools {
    padding-left: 5px;
}

.ed-panes {
    flex: 1;
    display: flex;
    min-height: 0;
}

.ed-tree-pane {
    width: 450px;
    flex: none;
    display: flex;
    flex-direction: column;
    background-color: #fff;
    border: 1px solid #8e8e8e;
    border-top-width: 2px;
}

.ed-tree-main {
    flex: 1;
    display: flex;
    min-height: 0;
}

.ed-tree {
    flex: 1;
    min-width: 0;
    padding-top: 1px;
}

.ed-vthumb {
    height: 350px;
    margin-top: 488px;
}

.ed-thumb {
    width: 248px;
}

.list-pane {
    flex: 1;
    margin: 0 0 18px 5px;
    min-width: 0;
    display: flex;
    flex-direction: column;
    background-color: #fff;
    border: 1px solid #8e8e8e;
    border-top-width: 2px;
}

.list-main {
    flex: 1;
    min-height: 0;
    overflow: hidden;
}

.list-head {
    display: flex;
    height: 27px;
    align-items: center;
}

.lh-name {
    width: 395px;
    flex: none;
    padding-left: 6px;
    border-right: 1px solid #e5e5e5;
    line-height: 24px;
}

.lh-status {
    width: 195px;
    flex: none;
    text-align: center;
    border-right: 1px solid #e5e5e5;
    line-height: 24px;
}

.lh-comment {
    width: 216px;
    flex: none;
    text-align: center;
}

.list-row {
    display: flex;
    align-items: center;
    height: 20.400px;
    padding-left: 5px;
    white-space: nowrap;
}

.pi {
    width: 16px;
    height: 16px;
    flex: none;
    margin-right: 2px;
}

.c-name {
    width: 419px;
    flex: none;
    overflow: hidden;
}

.c-status {
    width: 242px;
    flex: none;
}

.list-sel .c-name,
.list-sel .c-status,
.list-sel .c-status + span {
    background-color: #f0f0f0;
    line-height: 20px;
}

.list-sel .c-status + span {
    flex: 1;
}

.list-scroll {
    justify-content: flex-end;
    height: 19px;
}

.ed-status {
    height: 26px;
    flex: none;
    padding: 2px 0 0 2px;
    line-height: 26px;
    border-top: 1px solid #d8d8d8;
}

.outer-status {
    flex: 1;
    display: flex;
}

.os-cell {
    border-right: 1px solid #d0d0d0;
}

.os-a {
    width: 1000px;
}

.os-b {
    width: 143px;
}

/* the policy dialog lies over the editor */
.dialog {
    position: absolute;
    left: 906px;
    top: 442px;
    width: 736px;
    height: 683px;
    display: flex;
    flex-direction: column;
    background-color: #f0f0f0;
    border: 1px solid #7f7f7f;
    box-shadow: 0 0 6px rgba(0, 0, 0, 0.12);
}

.dlg-title {
    height: 32px;
}

.dlg-icon {
    margin: 0 5px 0 9px;
}

.dlg-controls {
    gap: 35px;
    padding-right: 17px;
}

.dlg-body {
    flex: 1;
    display: flex;
    flex-direction: column;
    min-height: 0;
    padding: 0 10px 0 3px;
}

.dlg-head {
    height: 62px;
    flex: none;
    display: flex;
    align-items: flex-start;
    padding-top: 15px;
}

.dlg-set-icon {
    margin-left: 4px;
}

.dlg-head-text {
    margin-left: 8px;
    margin-top: -2px;
    flex: 1;
}

.btn {
    display: flex;
    align-items: center;
    justify-content: center;
    background-color: #e1e1e1;
    border: 1px solid #adadad;
}

.btn-prev,
.btn-next {
    height: 28px;
    width: 138px;
    flex: none;
    margin-top: 1px;
}

.btn-next {
    margin-left: 10px;
    margin-right: 35px;
}

.dlg-form {
    display: flex;
    flex: none;
    height: 132px;
}

.radios {
    width: 150px;
    flex: none;
    padding: 2px 0 0 6px;
    display: flex;
    flex-direction: column;
    gap: 11px;
}

.radio-row {
    display: flex;
    align-items: center;
    height: 19px;
}

.radio {
    width: 15px;
    height: 15px;
    flex: none;
    margin-right: 4px;
    border: 1px solid #555;
    border-radius: 50%;
    background-color: #fff;
}

.radio-on {
    background: radial-gradient(circle, #222 0 3.800px, #fff 4.500px);
}

.fields {
    display: grid;
    grid-template-columns: 100px 472px;
    grid-template-rows: 76px 48px;
    row-gap: 8px;
}

.f-label {
    line-height: 13px;
}

.f-box {
    position: relative;
    border: 2px solid #a3a3a3;
}

.f-white {
    background-color: #fff;
}

.f-text {
    display: block;
    padding: 1px 0 0 4px;
    line-height: 16px;
}

.f-scroll {
    position: absolute;
    top: 0;
    right: 0;
    bottom: 0;
    width: 18px;
    display: flex;
    flex-direction: column;
    justify-content: space-between;
    align-items: center;
}

.dlg-labels {
    height: 54px;
    flex: none;
    display: flex;
    padding-top: 14px;
    line-height: 20px;
}

.lbl-opt {
    width: 331px;
    padding-left: 2px;
}

.dlg-panels {
    display: flex;
    height: 346px;
    flex: none;
}

.opt-box {
    position: relative;
    width: 320px;
    flex: none;
    background-color: #fff;
    border: 1px solid #8e8e8e;
    border-top-width: 2px;
    padding: 6px 0 0 6px;
}

.opt-title {
    line-height: 16px;
    margin-bottom: 10px;
}

.combo {
    position: relative;
    width: 255px;
    height: 23px;
    margin-left: -1px;
    padding-left: 2px;
    line-height: 21px;
    background-color: #e3e3e3;
    border: 1px solid #bdbdbd;
}

.combo-chev {
    position: absolute;
    right: 3px;
    top: 4px;
    width: 14px;
    height: 14px;
}

.red-arrow {
    position: absolute;
    left: 37px;
    top: 49px;
    width: 70px;
    height: 60px;
    filter: drop-shadow(1px 2px 2px rgba(0, 0, 0, 0.3));
}

.help-box {
    width: 379px;
    flex: none;
    margin-left: 9px;
    padding: 2px 0 0 5px;
    overflow: hidden;
    white-space: nowrap;
    background-color: #fff;
    border: 1px solid #8e8e8e;
    line-height: 16.150px;
}

.help-box p {
    margin: 0 0 16.150px;
}

.help-scroll {
    margin-left: 2px;
}

.help-thumb {
    height: 208px;
    margin-top: 2px;
}

.dlg-buttons {
    display: flex;
    justify-content: flex-end;
    gap: 9px;
    margin-top: 18px;
}

.btn-act,
.btn-ok {
    width: 90px;
    height: 27px;
}

.btn-ok {
    border: 2px solid #0078d7;
}
```
